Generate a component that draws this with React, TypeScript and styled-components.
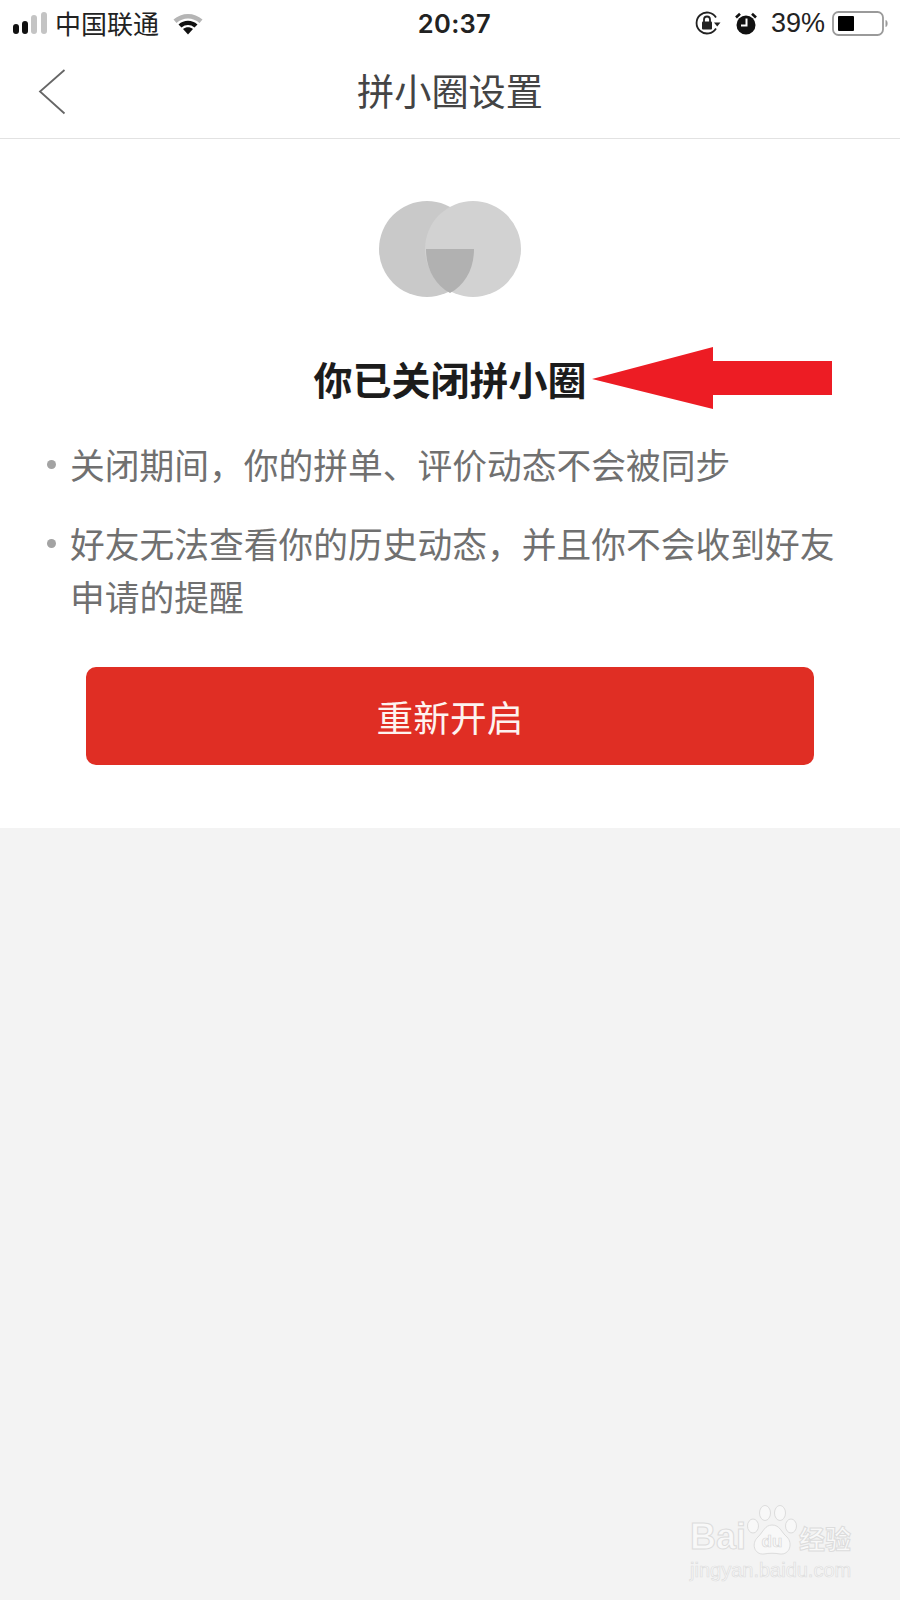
import * as React from "react";
import styled, { createGlobalStyle } from "styled-components";

const cjk = `"Noto Sans CJK SC", "Liberation Sans", sans-serif`;

const GlobalStyle = createGlobalStyle`
  html, body {
    margin: 0;
    padding: 0;
    background: #f3f3f3;
  }
  * {
    box-sizing: border-box;
  }
`;

const Page = styled.div`
  position: relative;
  width: 900px;
  height: 1600px;
  overflow: hidden;
  background: #f3f3f3;
  font-family: ${cjk};
`;

const Header = styled.header`
  background: #fff;
  border-bottom: 1px solid #e2e2e2;
  height: 139px;
`;

const StatusBar = styled.div`
  display: grid;
  grid-template-columns: 1fr auto 1fr;
  align-items: center;
  height: 46px;
  padding: 0 12px 0 13px;
  color: #222;
`;

const StatusLeft = styled.div`
  display: flex;
  align-items: center;
`;

const StatusRight = styled.div`
  display: flex;
  align-items: center;
  justify-content: flex-end;
`;

const Carrier = styled.span`
  font-size: 26px;
  line-height: 46px;
  margin: 0 14px 0 8px;
`;

const Time = styled.span`
  font-family: "Inter", "Liberation Sans", sans-serif;
  font-size: 25.5px;
  font-weight: 600;
  letter-spacing: 0.3px;
  margin-left: 8px;
`;

const Percent = styled.span`
  font-family: "Liberation Sans", sans-serif;
  font-size: 27px;
  margin: 0 7px 0 14px;
`;

const NavBar = styled.div`
  display: grid;
  grid-template-columns: 1fr auto 1fr;
  align-items: center;
  height: 92px;
`;

const BackSlot = styled.div`
  display: flex;
  padding-left: 38px;
`;

const NavTitle = styled.h1`
  margin: 0 0 4px;
  font-size: 37.2px;
  font-weight: 400;
  color: #444;
  line-height: 88px;
`;

const Panel = styled.section`
  background: #fff;
  height: 689px;
  padding-top: 62px;
  display: flex;
  flex-direction: column;
`;

const Logo = styled.svg`
  display: block;
  align-self: center;
  margin-left: 0;
`;

const Heading = styled.h2`
  margin: 55.5px 0 0;
  text-align: center;
  font-size: 39px;
  font-weight: 700;
  line-height: 50px;
  color: #1c1c1c;
`;

const Notes = styled.ul`
  list-style: none;
  margin: 35px 0 0;
  padding: 0 0 0 70px;
  color: #707070;
  font-size: 34.75px;
  line-height: 53px;
`;

const Note = styled.li`
  position: relative;
  width: 780px;
  margin-bottom: 26px;

  &::before {
    content: "";
    position: absolute;
    left: -23px;
    top: 22px;
    width: 9px;
    height: 9px;
    border-radius: 50%;
    background: #a3a3a3;
  }
`;

const ReopenButton = styled.button`
  display: block;
  align-self: center;
  width: 728px;
  height: 98px;
  margin: 18.5px 0 0;
  border: 0;
  border-radius: 10px;
  background: #e02e24;
  color: #fdf3f0;
  font-family: ${cjk};
  font-size: 36.7px;
  padding: 0;
`;

const Arrow = styled.svg`
  position: absolute;
  left: 590px;
  top: 345px;
`;

const Watermark = styled.div`
  position: absolute;
  left: 690px;
  top: 1505px;
  width: 170px;
  color: #f8f8f8;
  -webkit-text-stroke: 1px #dcdcdc;
`;

const MarkRow = styled.div`
  display: flex;
  align-items: flex-end;
  height: 52px;
`;

const MarkLatin = styled.span`
  font-family: "Liberation Sans", sans-serif;
  font-size: 36px;
  font-weight: 700;
  line-height: 40px;
`;

const MarkCjk = styled.span`
  font-size: 26px;
  font-weight: 700;
  line-height: 38px;
  margin-left: -1px;
`;

const MarkUrl = styled.div`
  font-family: "Liberation Sans", sans-serif;
  font-size: 20px;
  line-height: 26px;
  white-space: nowrap;
  -webkit-text-stroke: 0.7px #dedede;
`;

function Signal() {
  return (
    <svg width="34" height="22" viewBox="0 0 34 22">
      <rect x="0" y="12" width="6" height="10" rx="3" fill="#111" />
      <rect x="9" y="9" width="6" height="13" rx="3" fill="#111" />
      <rect x="18" y="3" width="6" height="19" rx="3" fill="#c4c4c4" />
      <rect x="28" y="0" width="6" height="22" rx="3" fill="#c4c4c4" />
    </svg>
  );
}

function Wifi() {
  return (
    <svg width="30" height="23" viewBox="0 0 30 23">
      <path d="M0.5 7.5C8.5 0 21.5 0 29.5 7.5L26.5 11C20 5 10 5 3.5 11Z" fill="#b5b5b5" />
      <path d="M5.5 12.5C11 7.5 19 7.5 24.5 12.5L21.5 15.5C17.5 12.2 12.5 12.2 8.5 15.5Z" fill="#111" />
      <path d="M10 17C13 14.8 17 14.8 20 17L15 22.5Z" fill="#111" />
    </svg>
  );
}

function RotationLock() {
  return (
    <svg width="26" height="24" viewBox="0 0 26 24">
      <path d="M21 17.5A10.5 10.5 0 1 1 21 6.5" fill="none" stroke="#222" strokeWidth="1.8" />
      <path d="M19 11.5L25.5 11.5L22.2 15.5Z" fill="#222" />
      <rect x="7" y="10.5" width="10" height="8" rx="1" fill="#222" />
      <path d="M9 11V8.5a3 3 0 0 1 6 0V11" fill="none" stroke="#222" strokeWidth="1.8" />
    </svg>
  );
}

function Alarm() {
  return (
    <svg width="22" height="23" viewBox="0 0 22 23" style={{ marginLeft: 14 }}>
      <circle cx="11" cy="13" r="9.5" fill="#111" />
      <path d="M1 5.5L5 1.8" stroke="#111" strokeWidth="2.6" />
      <path d="M21 5.5L17 1.8" stroke="#111" strokeWidth="2.6" />
      <path d="M11.5 6.5V13.5H6" fill="none" stroke="#fff" strokeWidth="2" />
    </svg>
  );
}

function Battery() {
  return (
    <svg width="56" height="25" viewBox="0 0 56 25">
      <rect x="1" y="1" width="50" height="23" rx="5.5" fill="#fff" stroke="#9a9a9a" strokeWidth="1.8" />
      <rect x="6" y="5" width="16" height="15" rx="1" fill="#000" />
      <path d="M54 9.5C55.5 10.5 55.5 14.5 54 15.5Z" fill="#9a9a9a" stroke="#9a9a9a" />
    </svg>
  );
}

function BackChevron() {
  return (
    <svg width="28" height="46" viewBox="0 0 28 46">
      <path d="M26.5 1L2 22.5L26.5 44.5" fill="none" stroke="#666" strokeWidth="1.8" />
    </svg>
  );
}

function CircleLogo() {
  // lens of the two circles, cut at the horizontal centre line
  return (
    <Logo width="142" height="96" viewBox="0 0 142 96">
      <circle cx="48" cy="48" r="48" fill="#c9c9c9" />
      <circle cx="94" cy="48" r="48" fill="#d2d2d2" />
      <path d="M47 48H95C95 68 86 84 71 92C56 84 47 68 47 48Z" fill="#b1b1b1" />
    </Logo>
  );
}

function Paw() {
  return (
    <svg width="52" height="52" viewBox="0 0 52 52" style={{ margin: "0 1px" }}>
      <g fill="#f8f8f8" stroke="#dcdcdc" strokeWidth="1">
        <ellipse cx="6" cy="21" rx="5.5" ry="7" />
        <ellipse cx="18" cy="8" rx="5.5" ry="7.5" />
        <ellipse cx="33" cy="8" rx="5.5" ry="7.5" />
        <ellipse cx="44" cy="21" rx="5.5" ry="7" />
        <path d="M25 20C33 20 34 27 40 32C46 38 43 50 33 49C28 48 22 48 17 49C7 50 4 38 11 32C16 27 18 20 25 20Z" />
      </g>
      <text x="25" y="42" textAnchor="middle" fontFamily="Liberation Sans" fontSize="17" fontWeight="700" fill="#f8f8f8" stroke="#d8d8d8" strokeWidth="0.7">du</text>
    </svg>
  );
}

export default function App() {
  return (
    <Page>
      <GlobalStyle />
      <Header>
        <StatusBar>
          <StatusLeft>
            <Signal />
            <Carrier>中国联通</Carrier>
            <Wifi />
          </StatusLeft>
          <Time>20:37</Time>
          <StatusRight>
            <RotationLock />
            <Alarm />
            <Percent>39%</Percent>
            <Battery />
          </StatusRight>
        </StatusBar>
        <NavBar>
          <BackSlot>
            <BackChevron />
          </BackSlot>
          <NavTitle>拼小圈设置</NavTitle>
        </NavBar>
      </Header>
      <Panel>
        <CircleLogo />
        <Heading>你已关闭拼小圈</Heading>
        <Notes>
          <Note>关闭期间，你的拼单、评价动态不会被同步</Note>
          <Note>好友无法查看你的历史动态，并且你不会收到好友申请的提醒</Note>
        </Notes>
        <ReopenButton>重新开启</ReopenButton>
      </Panel>
      <Arrow width="244" height="66" viewBox="0 0 244 66">
        <path d="M2 34L123 2V16H242V50H123V64Z" fill="#ed1c24" />
      </Arrow>
      <Watermark>
        <MarkRow>
          <MarkLatin>Bai</MarkLatin>
          <Paw />
          <MarkCjk>经验</MarkCjk>
        </MarkRow>
        <MarkUrl>jingyan.baidu.com</MarkUrl>
      </Watermark>
    </Page>
  );
}
